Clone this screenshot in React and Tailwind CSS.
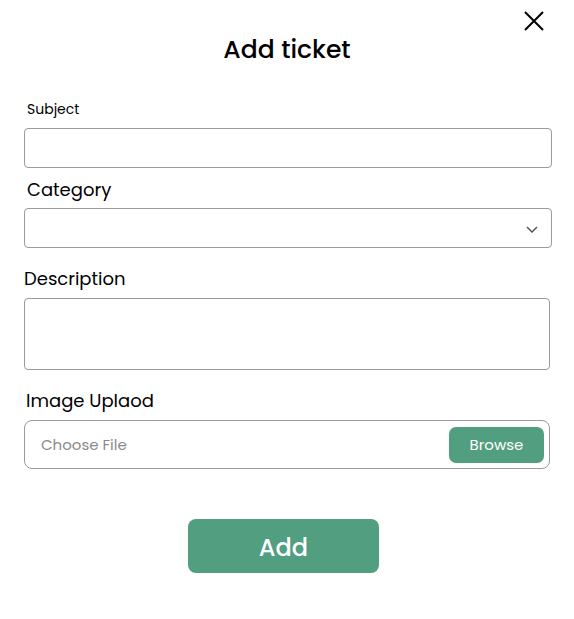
import { useState } from "react";

export default function App() {
  const [subject, setSubject] = useState("");
  const [category, setCategory] = useState("");
  const [description, setDescription] = useState("");

  return (
    <div className="relative h-[619px] w-[574px] bg-white font-['Poppins','Inter',sans-serif] text-black">
      <button
        type="button"
        aria-label="Close"
        className="absolute right-[29px] top-[10px] size-[22px] text-black"
      >
        <svg viewBox="0 0 22 22" fill="none" stroke="currentColor" strokeWidth="2" className="size-[22px]">
          <path d="M2 2L20 20M20 2L2 20" />
        </svg>
      </button>

      <div className="flex flex-col px-6 pt-[34px]">
        <h2 className="text-center text-[25px] font-medium leading-[32px]">Add ticket</h2>

        <label className="mt-[33px] pl-[3px] text-sm leading-5">Subject</label>
        <input
          value={subject}
          onChange={(e) => setSubject(e.target.value)}
          className="mt-[9px] h-10 w-[528px] rounded-[4px] border border-[#9a9a9a] px-3 text-sm outline-none"
        />

        <label className="mt-2 pl-[3px] text-lg leading-7">Category</label>
        <div className="relative mt-1 w-[528px]">
          <select
            value={category}
            onChange={(e) => setCategory(e.target.value)}
            className="h-10 w-full appearance-none rounded-[4px] border border-[#9a9a9a] bg-white px-3 text-sm outline-none"
          >
            <option value=""></option>
            <option value="technical">Technical</option>
            <option value="billing">Billing</option>
          </select>
          <svg
            viewBox="0 0 12 7"
            fill="none"
            stroke="#555555"
            strokeWidth="1.5"
            className="pointer-events-none absolute right-[14px] top-[18px] h-[7px] w-[12px]"
          >
            <path d="M1 1L6 6L11 1" />
          </svg>
        </div>

        <label className="mt-[17px] text-lg leading-7">Description</label>
        <textarea
          value={description}
          onChange={(e) => setDescription(e.target.value)}
          className="mt-[5px] h-[72px] w-[526px] resize-none rounded-[4px] border border-[#9a9a9a] px-3 py-2 text-sm outline-none"
        />

        <label className="mt-[17px] pl-[2px] text-lg leading-7">Image Uplaod</label>
        <div className="mt-[5px] flex h-[49px] w-[526px] items-center justify-between rounded-[8px] border border-[#9a9a9a] pl-4 pr-[5px]">
          <span className="pt-[2px] text-[15px] text-[#8a8a8a]">Choose File</span>
          <button
            type="button"
            className="h-9 w-[95px] rounded-[7px] bg-[#529e81] pt-[1px] text-[15px] text-white"
          >
            Browse
          </button>
        </div>

        <button
          type="button"
          className="ml-[164px] mt-[50px] h-[54px] w-[191px] rounded-[8px] bg-[#529e81] pt-[3px] text-2xl font-medium text-white"
        >
          Add
        </button>
      </div>
    </div>
  );
}
